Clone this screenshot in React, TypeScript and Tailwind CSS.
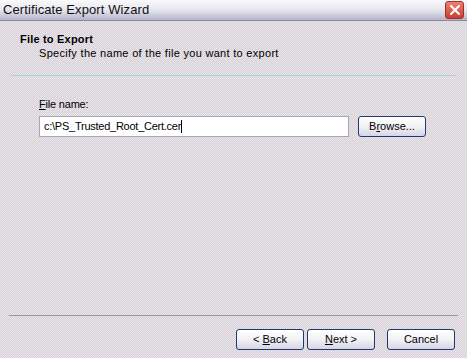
import React from 'react'

function WizButton({ children, className = '' }: { children: React.ReactNode; className?: string }) {
  return (
    <button
      className={`h-[21px] w-[68px] rounded-[3px] border border-[#1c3a6e] bg-gradient-to-b from-[#ffffff] via-[#f2f2f4] to-[#d6d4e6] text-[11px] text-black leading-none ${className}`}
    >
      {children}
    </button>
  )
}

export default function App() {
  return (
    <div
      className="w-[467px] h-[358px] flex flex-col overflow-hidden bg-[repeating-conic-gradient(#d4d0d6_0_25%,#ebe6ec_0_50%)] bg-[length:2px_2px] text-black"
      style={{ fontFamily: '"Liberation Sans", Arial, sans-serif' }}
    >
      {/* title bar */}
      <div className="h-[21px] flex items-center justify-between pl-[3px] pr-[3px] bg-gradient-to-b from-[#fafafc] via-[#e6e6ee] to-[#b4b4cc] border-b border-[#8a8a96]">
        <span className="text-[13px] tracking-[0.1px] text-[#101010]">Certificate Export Wizard</span>
        <div className="w-[19px] h-[18px] rounded-[3px] border border-[#a03030] bg-gradient-to-b from-[#f08070] to-[#c83c30] flex items-center justify-center">
          <svg width="12" height="12" viewBox="0 0 12 12">
            <path d="M2 2 L10 10 M10 2 L2 10" stroke="#fff" strokeWidth="2" strokeLinecap="round" />
          </svg>
        </div>
      </div>

      {/* header */}
      <div className="pl-[20px] pt-[11px] h-[54px]">
        <div className="text-[11px] font-bold leading-[14px] tracking-[0.2px]">File to Export</div>
        <div className="pl-[19px] text-[11px] leading-[15px] tracking-[0.3px]">Specify the name of the file you want to export</div>
      </div>
      <div className="mx-[10px] h-px bg-[#a8d4e0]" />

      {/* body */}
      <div className="flex-1 pl-[39px] pt-[21px]">
        <div className="text-[11px] leading-[14px] tracking-[-0.2px]">
          <span className="underline">F</span>ile name:
        </div>
        <div className="mt-[5px] flex items-center gap-[9px]">
          <div className="w-[310px] h-[21px] bg-white border border-[#a4a8b4] flex items-center px-[4px] text-[11px] tracking-[-0.25px]">
            c:\PS_Trusted_Root_Cert.cer
            <span className="inline-block w-px h-[13px] bg-black" />
          </div>
          <WizButton>
            B<span className="underline">r</span>owse...
          </WizButton>
        </div>
      </div>

      {/* footer */}
      <div className="mx-[9px] h-px bg-[#9a98a0]" />
      <div className="h-[42px] flex items-start pt-[13px] pl-[236px]">
        <WizButton>
          &lt; <span className="underline">B</span>ack
        </WizButton>
        <WizButton className="ml-[3px]">
          <span className="underline">N</span>ext &gt;
        </WizButton>
        <WizButton className="ml-[12px]">Cancel</WizButton>
      </div>
    </div>
  )
}
